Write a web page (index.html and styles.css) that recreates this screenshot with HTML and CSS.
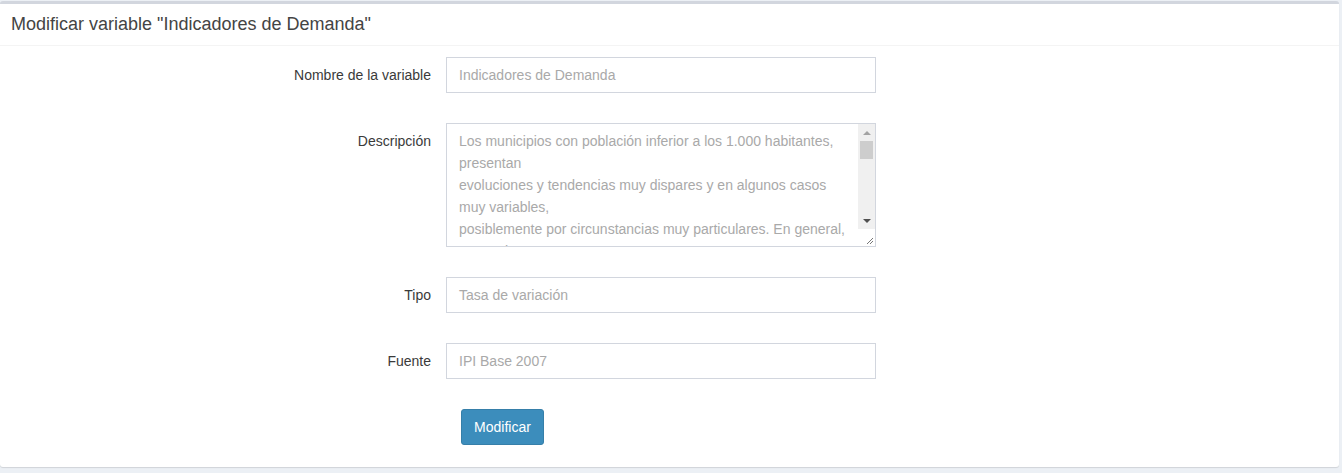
FILE: index.html
```html
<!DOCTYPE html>
<html lang="es">
<head>
<meta charset="utf-8">
<title>Modificar variable</title>
<link rel="stylesheet" href="styles.css">
</head>
<body>
<div class="box">
  <div class="box-header">
    <h3 class="box-title">Modificar variable "Indicadores de Demanda"</h3>
  </div>
  <form class="box-body">
    <div class="form-group">
      <label class="control-label">Nombre de la variable</label>
      <div class="form-control">Indicadores de Demanda</div>
    </div>
    <div class="form-group">
      <label class="control-label">Descripción</label>
      <div class="textarea">
        <div class="textarea-text">Los municipios con población inferior a los 1.000 habitantes,<br>presentan<br>evoluciones y tendencias muy dispares y en algunos casos<br>muy variables,<br>posiblemente por circunstancias muy particulares. En general,<br>en muchos casos</div>
        <div class="scrollbar">
          <div class="sb-track">
            <div class="sb-arrow up"></div>
            <div class="sb-thumb"></div>
            <div class="sb-space"></div>
            <div class="sb-arrow down"></div>
          </div>
          <div class="resizer">
            <svg width="9" height="9" viewBox="0 0 9 9"><path d="M8 2 L2 8 M8 5 L5 8" stroke="#777" stroke-width="1"/></svg>
          </div>
        </div>
      </div>
    </div>
    <div class="form-group">
      <label class="control-label">Tipo</label>
      <div class="form-control">Tasa de variación</div>
    </div>
    <div class="form-group">
      <label class="control-label">Fuente</label>
      <div class="form-control">IPI Base 2007</div>
    </div>
    <div class="form-group actions">
      <span></span>
      <div class="btn-wrap"><button type="button" class="btn">Modificar</button></div>
    </div>
  </form>
</div>
</body>
</html>
```

FILE: styles.css
```css
html, body {
  margin: 0;
  padding: 0;
}
body {
  background: #ecf0f5;
  font-family: "Liberation Sans", Arial, sans-serif;
  font-size: 14px;
  color: #333;
  padding-top: 1px;
  width: 1342px;
  height: 473px;
  overflow: hidden;
}
.box {
  width: 1339px;
  background: #fff;
  border-top: 3px solid #d2d6de;
  border-radius: 3px;
  box-shadow: 0 1px 1px rgba(0,0,0,0.12);
  box-sizing: border-box;
  height: 466px;
}
.box-header {
  padding: 0 11px;
  height: 41px;
  display: flex;
  align-items: center;
  border-bottom: 1px solid #f4f4f4;
}
.box-title {
  margin: 0;
  font-size: 18px;
  font-weight: normal;
  color: #444;
  line-height: 1;
  position: relative;
  top: -1px;
}
.box-body {
  padding: 11px 0 0 0;
  display: flex;
  flex-direction: column;
  gap: 30px;
}
.form-group {
  display: grid;
  grid-template-columns: 431px 430px;
  column-gap: 15px;
  align-items: start;
}
.control-label {
  text-align: right;
  color: #3a3a3a;
  line-height: 36px;
}
.form-control {
  box-sizing: border-box;
  height: 36px;
  border: 1px solid #d2d6de;
  padding: 0 12px;
  line-height: 34px;
  color: #a9a9a9;
}
.textarea {
  box-sizing: border-box;
  height: 124px;
  border: 1px solid #d2d6de;
  display: flex;
  overflow: hidden;
}
.textarea-text {
  flex: 1;
  padding: 6px 0 0 12px;
  line-height: 22px;
  color: #a9a9a9;
  overflow: hidden;
  white-space: nowrap;
}
.scrollbar {
  width: 17px;
  display: flex;
  flex-direction: column;
}
.sb-track {
  flex: 1;
  background: #f0f0f0;
  display: flex;
  flex-direction: column;
  align-items: center;
}
.sb-arrow {
  height: 17px;
  width: 17px;
  display: flex;
  align-items: center;
  justify-content: center;
}
.sb-arrow.up::before {
  content: "";
  border-left: 4px solid transparent;
  border-right: 4px solid transparent;
  border-bottom: 4px solid #a3a3a3;
}
.sb-arrow.down::before {
  content: "";
  border-left: 4px solid transparent;
  border-right: 4px solid transparent;
  border-top: 4px solid #505050;
}
.sb-thumb {
  width: 13px;
  height: 18px;
  background: #cdcdcd;
}
.sb-space {
  flex: 1;
}
.resizer {
  height: 17px;
  background: #fff;
  display: flex;
  align-items: flex-end;
  justify-content: flex-end;
  padding: 0 1px 1px 0;
  box-sizing: border-box;
}
.resizer svg {
  display: block;
}
.actions {
  grid-template-columns: 431px auto;
}
.btn-wrap {
  padding-left: 15px;
  justify-self: start;
}
.btn {
  font-family: "Liberation Sans", Arial, sans-serif;
  font-size: 14px;
  color: #fff;
  background: #3c8dbc;
  border: 1px solid #367fa9;
  border-radius: 3px;
  height: 36px;
  width: 83px;
  padding: 0;
  cursor: pointer;
}
```
